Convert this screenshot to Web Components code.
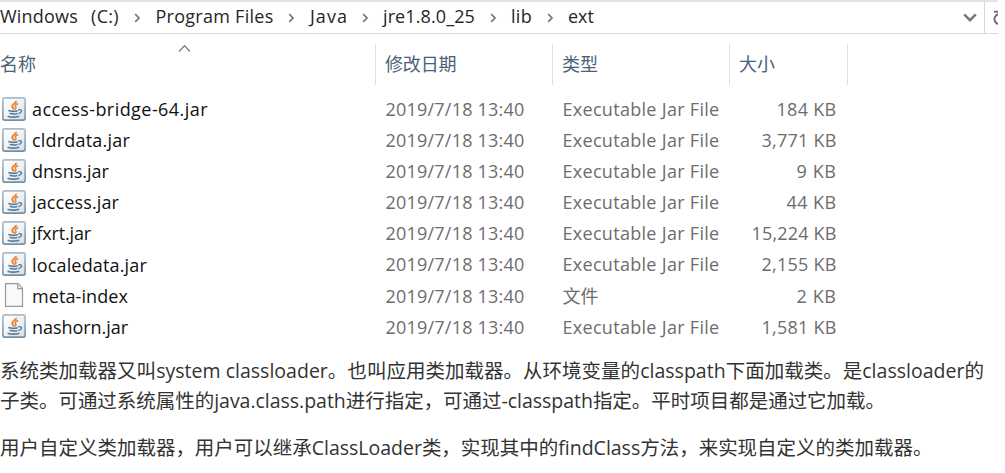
<!DOCTYPE html>
<html lang="zh-CN">
<head>
<meta charset="utf-8">
<title>ext</title>
<style>
body{margin:0;background:#fff;font-family:"Open Sans","Noto Sans CJK SC",sans-serif;width:1005px;height:473px;overflow:hidden}
</style>
</head>
<body>
<explorer-page></explorer-page>
<script>
// One line of text whose letter spacing is adjusted to a given width (w).
class FitText extends HTMLElement{
  connectedCallback(){
    this.attachShadow({mode:'open'}).innerHTML='<style>:host{display:inline-block;white-space:pre}span{display:inline-block}</style><span><slot></slot></span>';
    const w=+this.getAttribute('w');
    const span=this.shadowRoot.querySelector('span');
    if(!w)return;
    const n=[...this.textContent].length;
    span.style.letterSpacing=((w-span.getBoundingClientRect().width)/n)+'px';
  }
}
class JarIcon extends HTMLElement{
  connectedCallback(){
    this.attachShadow({mode:'open'}).innerHTML=`<style>:host{display:block;width:24px;height:24px}svg{display:block}</style>
<svg width="24" height="24" viewBox="0 0 24 24" fill="none"><defs><linearGradient id="g" x2="1" y2="1"><stop stop-color="#fff"/><stop offset=".5" stop-color="#f0f3f6"/><stop offset="1" stop-color="#d3dde5"/></linearGradient><linearGradient id="b" x2="0" y2="1"><stop stop-color="#a9bccb"/><stop offset="1" stop-color="#7590a5"/></linearGradient></defs>
<rect x=".9" y=".9" width="22.2" height="22.2" rx="1.8" fill="url(#g)" stroke="url(#b)" stroke-width="1.6"/>
<path d="M13.8 3.8c1 2.3-3.6 3.3-3.6 5.5 0 1.4 1.4 2.1 2 3.3" stroke="#ed8434" stroke-width="2"/><path d="M16.2 6.6c-2.3.9-3.5 1.8-2.6 3.1.7 1 .5 1.7-.6 2.7" stroke="#ed8434" stroke-width="1.6"/>
<path d="M6.3 13.6c2.5.8 6.7.8 9.4.1M7.6 16.3c2.3.8 5.4.8 7.7.1M5.6 19.2c3.2 1.1 8.2 1.1 11.6 0" stroke="#547b99" stroke-width="1.6"/><path d="M16.3 12.8c3-.7 4 .9 2.7 2.3-.7.8-1.6 1.2-2.6 1.4" stroke="#547b99" stroke-width="1.4"/></svg>`;
  }
}
class DocIcon extends HTMLElement{
  connectedCallback(){
    this.attachShadow({mode:'open'}).innerHTML=`<style>:host{display:block;width:24px;height:24px}svg{display:block}</style>
<svg width="24" height="24" viewBox="0 0 24 24"><path d="M3.5.7h12.7l4.3 4.4v18.2h-17z" fill="#f9f9f9" stroke="#999" stroke-width="1.2"/><path d="M15.7.7v4.9h4.8" fill="#e5e5e5" stroke="#999" stroke-width="1.1"/></svg>`;
  }
}
class AddressBar extends HTMLElement{
  connectedCallback(){
    const crumbs=[['Windows',78],['(C:)',28],['Program Files',118],['Java',38],['jre1.8.0_25',92],['lib',21],['ext',26]];
    const starts=[0,91,155.5,310,383,511,568];
    let html='';
    crumbs.forEach(([t,w],i)=>{
      const next=starts[i+1];
      html+=`<fit-text w="${w}">${t}</fit-text>`;
      if(i<6){const g=next-starts[i]-w;
        html+=`<i style="width:${g}px">${i?'<svg width="7" height="10" viewBox="0 0 7 10"><path d="M1.2 1.2 5 5 1.2 8.8" fill="none" stroke="#777" stroke-width="1.7"/></svg>':''}</i>`}
    });
    this.attachShadow({mode:'open'}).innerHTML=`<style>
:host{display:flex;width:998px;height:34px;box-sizing:border-box;border-top:2px solid #e4e4e4;border-bottom:1px solid #d9d9d9;color:#262626;font-size:18px;line-height:30px;overflow:hidden}
.path{flex:1;display:flex;align-items:center}
fit-text{margin-top:-3px}
i{display:flex;justify-content:center;align-items:center;height:30px}
.drop{width:29px;display:flex;align-items:center;justify-content:center;border-right:1px solid #d9d9d9}
.refresh{width:13px;display:flex;align-items:center;padding-left:7px;box-sizing:border-box;overflow:hidden}
svg{flex:none;display:block}</style>
<div class="path">${html}</div>
<div class="drop"><svg width="14" height="9" viewBox="0 0 14 9"><path d="M1.2 1.4 7 7.2 12.8 1.4" fill="none" stroke="#777" stroke-width="2.4"/></svg></div>
<div class="refresh"><svg width="14" height="16" viewBox="0 0 14 16" fill="none" stroke="#707070" stroke-width="2"><path d="M6.3 4.3A5 5 0 1 0 10.3 5M2 1.7H8v4"/></svg></div>`;
  }
}
const COLS='375px 177px 177px 118px';
class ListHeader extends HTMLElement{
  connectedCallback(){
    this.attachShadow({mode:'open'}).innerHTML=`<style>
:host{display:grid;grid-template-columns:${COLS};width:849px;height:41px;margin-top:10px;color:#4c607a;font-size:18px;line-height:41px}
div{border-right:1px solid #dfdfdf;padding-left:10px;display:flex;margin-right:-1px}
.name{padding-left:0;position:relative}
svg{position:absolute;left:178px;top:0}</style>
<div class="name"><fit-text w="36">名称</fit-text><svg width="13" height="9" viewBox="0 0 13 9"><path d="M1 7.4 6.5 1.8 12 7.4" fill="none" stroke="#808080" stroke-width="1.4"/></svg></div><div><fit-text w="71.5">修改日期</fit-text></div><div><fit-text w="36">类型</fit-text></div><div><fit-text w="36">大小</fit-text></div>`;
  }
}
class FileRow extends HTMLElement{
  connectedCallback(){
    const a=n=>this.getAttribute(n);
    const doc=a('kind')==='doc';
    this.attachShadow({mode:'open'}).innerHTML=`<style>
:host{display:grid;grid-template-columns:${COLS};width:849px;height:31.1px;line-height:31px;font-size:18px;color:#6d6d6d}
.n{display:flex;align-items:center;color:#111}
jar-icon,doc-icon{margin:-2px 6px 0 2px}
.c{padding-left:10.5px}
.s{text-align:right;padding-right:10.5px}</style>
<div class="n">${doc?'<doc-icon></doc-icon>':'<jar-icon></jar-icon>'}<fit-text w="${a('nw')}">${a('name')}</fit-text></div>
<div class="c"><fit-text w="139">2019/7/18 13:40</fit-text></div>
<div class="c">${doc?'<fit-text w="36">文件</fit-text>':'<fit-text w="157">Executable Jar File</fit-text>'}</div>
<div class="s"><fit-text w="${a('sw')}">${a('size')}</fit-text></div>`;
  }
}
class BodyText extends HTMLElement{
  connectedCallback(){
    this.attachShadow({mode:'open'}).innerHTML='<style>:host{display:block;font-size:19.5px;line-height:30px;color:#333;margin-bottom:17px}</style><slot></slot>';
  }
}
class ExplorerPage extends HTMLElement{
  connectedCallback(){
    const rows=[['access-bridge-64.jar',176,'184 KB',60],['cldrdata.jar',98,'3,771 KB',75],['dnsns.jar',77,'9 KB',40],['jaccess.jar',87,'44 KB',50],['jfxrt.jar',59,'15,224 KB',85],['localedata.jar',115,'2,155 KB',75],['meta-index',96,'2 KB',40],['nashorn.jar',96,'1,581 KB',75]];
    this.attachShadow({mode:'open'}).innerHTML=`<style>:host{display:block}.rows{padding-top:9px}.text{padding-top:13px}fit-text{display:block}</style>
<address-bar></address-bar><list-header></list-header>
<div class="rows">${rows.map(r=>`<file-row name="${r[0]}" nw="${r[1]}" size="${r[2]}" sw="${r[3]}" kind="${r[0]==='meta-index'?'doc':'jar'}"></file-row>`).join('')}</div>
<div class="text">
<body-text><fit-text w="984">系统类加载器又叫system classloader。也叫应用类加载器。从环境变量的classpath下面加载类。是classloader的</fit-text><fit-text w="885">子类。可通过系统属性的java.class.path进行指定，可通过-classpath指定。平时项目都是通过它加载。</fit-text></body-text>
<body-text><fit-text w="932.5">用户自定义类加载器，用户可以继承ClassLoader类，实现其中的findClass方法，来实现自定义的类加载器。</fit-text></body-text></div>`;
  }
}
customElements.define('fit-text',FitText);
customElements.define('jar-icon',JarIcon);
customElements.define('doc-icon',DocIcon);
customElements.define('address-bar',AddressBar);
customElements.define('list-header',ListHeader);
customElements.define('file-row',FileRow);
customElements.define('body-text',BodyText);
customElements.define('explorer-page',ExplorerPage);
</script>
</body>
</html>
